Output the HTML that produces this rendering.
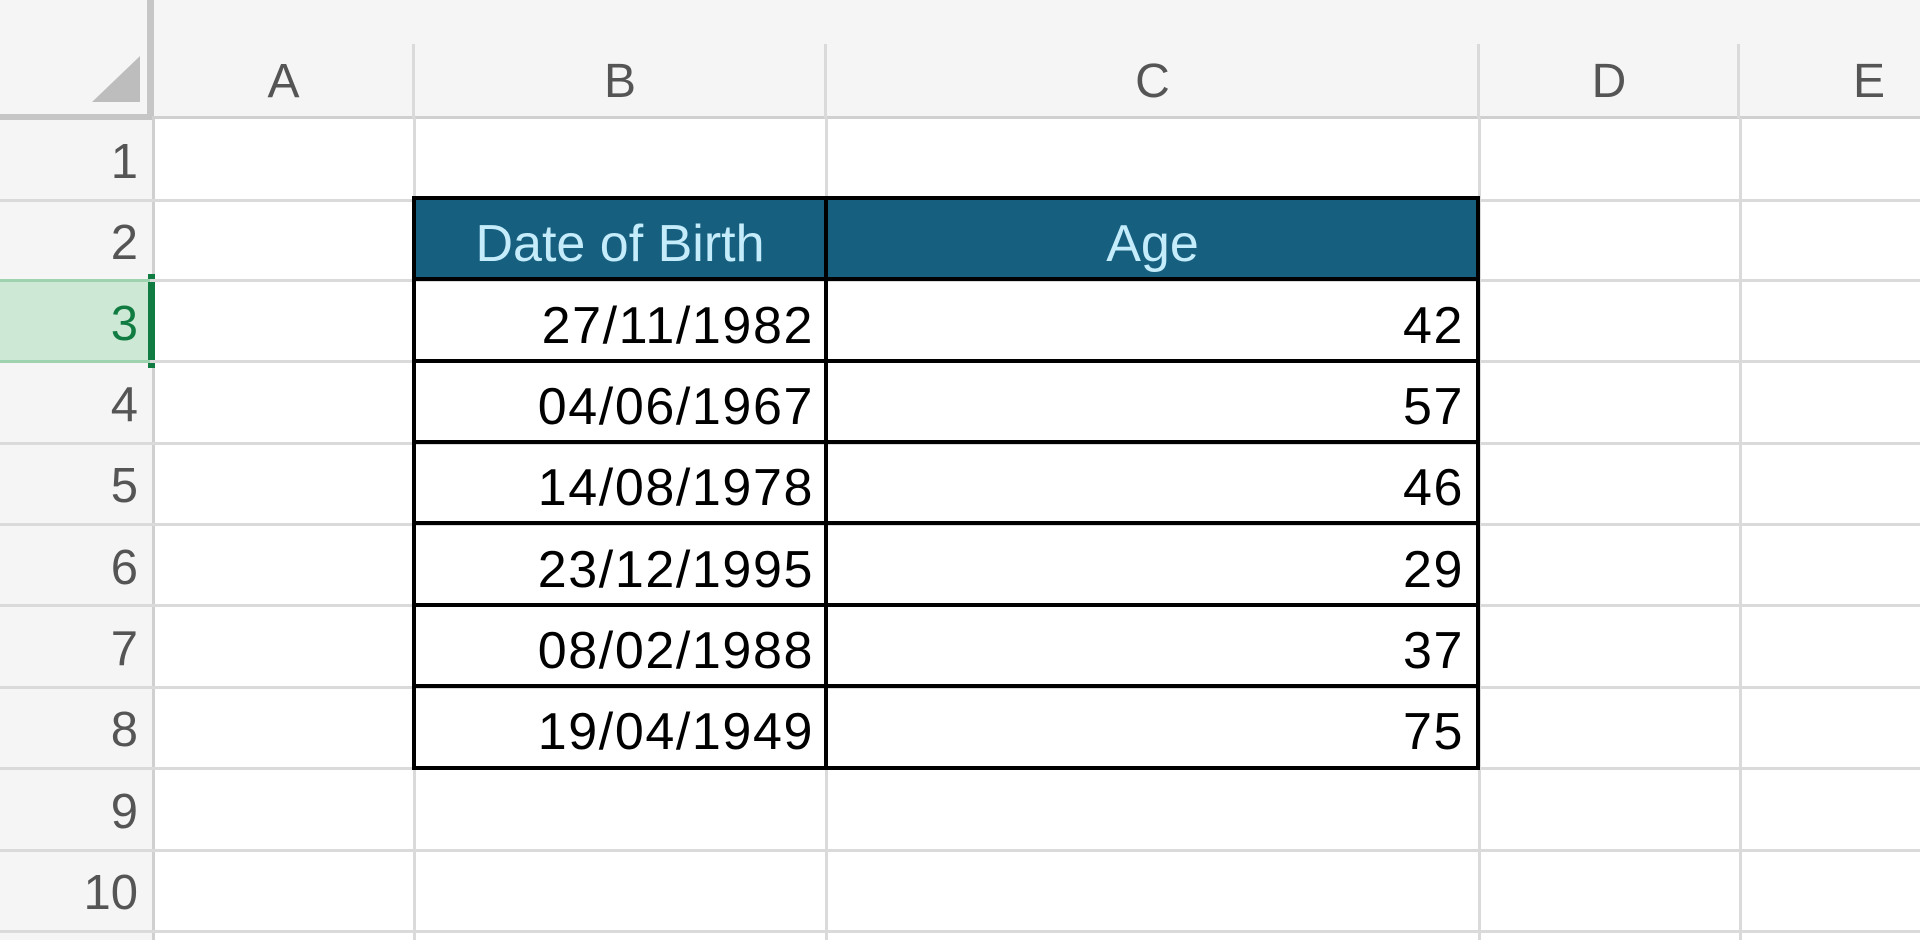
<!DOCTYPE html>
<html><head><style>
*{margin:0;padding:0;box-sizing:border-box}
body{width:1920px;height:940px;background:#fff;position:relative;overflow:hidden;font-family:"Liberation Sans",sans-serif}
.a{position:absolute}
.hl{position:absolute;height:3px;background:#dadada}
.vl{position:absolute;width:3px;background:#dadada}
.ch{position:absolute;top:52px;font-size:48px;color:#555;text-align:center;line-height:60px}
.rh{position:absolute;left:0;width:138px;text-align:right;font-size:49px;color:#555;line-height:80px}
.bk{position:absolute;background:#000}
.d{position:absolute;font-size:52px;color:#000;line-height:80px;text-align:right;letter-spacing:1.6px}
</style></head><body>
<div class="a" style="left:0;top:0;width:1920px;height:118px;background:#f5f5f5"></div>
<div class="a" style="left:0;top:0;width:153px;height:940px;background:#f5f5f5"></div>
<svg class="a" style="left:90px;top:54px" width="52" height="50"><polygon points="50,2 50,48 2,48" fill="#bdbdbd"/></svg>
<div class="a" style="left:147px;top:0;width:7px;height:118px;background:#c6c6c6"></div>
<div class="a" style="left:0;top:114px;width:154px;height:6px;background:#c6c6c6"></div>
<div class="a" style="left:153px;top:116px;width:1767px;height:3px;background:#d0d0d0"></div>
<div class="a" style="left:152px;top:116px;width:3px;height:824px;background:#d0d0d0"></div>
<div class="vl" style="left:412px;top:44px;height:74px"></div>
<div class="vl" style="left:824px;top:44px;height:74px"></div>
<div class="vl" style="left:1477px;top:44px;height:74px"></div>
<div class="vl" style="left:1737px;top:44px;height:74px"></div>
<div class="ch" style="left:154px;width:259px">A</div>
<div class="ch" style="left:414px;width:412px">B</div>
<div class="ch" style="left:826px;width:653px">C</div>
<div class="ch" style="left:1479px;width:260px">D</div>
<div class="ch" style="left:1739px;width:260px">E</div>
<div class="a" style="left:0;top:281px;width:150px;height:80px;background:#cde9d6"></div>
<div class="a" style="left:148px;top:274px;width:7px;height:94px;background:#107c41"></div>
<div class="hl" style="left:0;top:199px;width:1920px"></div>
<div class="hl" style="left:0;top:279px;width:1920px"></div>
<div class="hl" style="left:0;top:360px;width:1920px"></div>
<div class="hl" style="left:0;top:442px;width:1920px"></div>
<div class="hl" style="left:0;top:523px;width:1920px"></div>
<div class="hl" style="left:0;top:604px;width:1920px"></div>
<div class="hl" style="left:0;top:686px;width:1920px"></div>
<div class="hl" style="left:0;top:767px;width:1920px"></div>
<div class="hl" style="left:0;top:849px;width:1920px"></div>
<div class="hl" style="left:0;top:930px;width:1920px"></div>
<div class="a" style="left:0;top:279px;width:150px;height:3px;background:#9fd3b0"></div>
<div class="a" style="left:0;top:360px;width:150px;height:3px;background:#9fd3b0"></div>
<div class="vl" style="left:413px;top:118px;height:822px"></div>
<div class="vl" style="left:825px;top:118px;height:822px"></div>
<div class="vl" style="left:1478px;top:118px;height:822px"></div>
<div class="vl" style="left:1739px;top:118px;height:822px"></div>
<div class="rh" style="top:122px">1</div>
<div class="rh" style="top:203px">2</div>
<div class="rh" style="top:284px;color:#107c41">3</div>
<div class="rh" style="top:365px">4</div>
<div class="rh" style="top:446px">5</div>
<div class="rh" style="top:528px">6</div>
<div class="rh" style="top:609px">7</div>
<div class="rh" style="top:690px">8</div>
<div class="rh" style="top:772px">9</div>
<div class="rh" style="top:853px">10</div>
<div class="a" style="left:414px;top:198px;width:1066px;height:82px;background:#175f7f"></div>
<div class="a" style="left:414px;top:204px;width:412px;line-height:80px;text-align:center;font-size:52px;color:#c4ecfa">Date of Birth</div>
<div class="a" style="left:826px;top:204px;width:653px;line-height:80px;text-align:center;font-size:52px;color:#c4ecfa">Age</div>
<div class="bk" style="left:412px;top:196px;width:4px;height:574px"></div>
<div class="bk" style="left:824px;top:196px;width:4px;height:574px"></div>
<div class="bk" style="left:1476px;top:196px;width:4px;height:574px"></div>
<div class="bk" style="left:412px;top:196px;width:1068px;height:4px"></div>
<div class="bk" style="left:412px;top:277px;width:1068px;height:4px"></div>
<div class="bk" style="left:412px;top:359px;width:1068px;height:4px"></div>
<div class="bk" style="left:412px;top:440px;width:1068px;height:4px"></div>
<div class="bk" style="left:412px;top:521px;width:1068px;height:4px"></div>
<div class="bk" style="left:412px;top:603px;width:1068px;height:4px"></div>
<div class="bk" style="left:412px;top:684px;width:1068px;height:4px"></div>
<div class="bk" style="left:412px;top:766px;width:1068px;height:4px"></div>
<div class="d" style="left:416px;top:286px;width:398px">27/11/1982</div>
<div class="d" style="left:416px;top:367px;width:398px">04/06/1967</div>
<div class="d" style="left:416px;top:448px;width:398px">14/08/1978</div>
<div class="d" style="left:416px;top:530px;width:398px">23/12/1995</div>
<div class="d" style="left:416px;top:611px;width:398px">08/02/1988</div>
<div class="d" style="left:416px;top:692px;width:398px">19/04/1949</div>
<div class="d" style="left:828px;top:286px;width:636px">42</div>
<div class="d" style="left:828px;top:367px;width:636px">57</div>
<div class="d" style="left:828px;top:448px;width:636px">46</div>
<div class="d" style="left:828px;top:530px;width:636px">29</div>
<div class="d" style="left:828px;top:611px;width:636px">37</div>
<div class="d" style="left:828px;top:692px;width:636px">75</div>
</body></html>
